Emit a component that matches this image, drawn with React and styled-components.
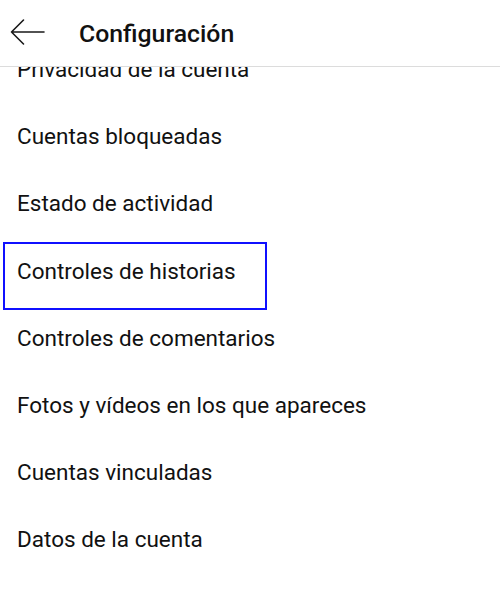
import React, { useLayoutEffect, useRef } from "react";
import styled, { createGlobalStyle } from "styled-components";

const Global = createGlobalStyle`
  html, body { margin: 0; padding: 0; background: #fff; }
  body { font-family: Roboto, "Noto Sans", sans-serif; color: #000; }
`;

const Screen = styled.div`
  width: 500px;
  height: 592px;
  display: flex;
  flex-direction: column;
  background: #fff;
  overflow: hidden;
`;

const Header = styled.header`
  flex: 0 0 66px;
  display: flex;
  align-items: center;
  border-bottom: 1px solid #dcdcdc;
  padding-left: 10px;
  gap: 33px;
`;

const BackButton = styled.button`
  width: 36px;
  height: 28px;
  padding: 0;
  border: 0;
  background: none;
  display: flex;
  align-items: center;
  justify-content: center;
  margin-top: -2px;
`;

const Title = styled.h1`
  margin: 0;
  font-family: Roboto, sans-serif;
  font-weight: 500;
  font-size: 24.8px;
  color: #111;
`;

const Viewport = styled.div`
  flex: 1;
  overflow-y: auto;
  scrollbar-width: none;
  &::-webkit-scrollbar { display: none; }
`;

const List = styled.ul`
  list-style: none;
  margin: 0;
  padding: 0 0 120px 0;
`;

const Row = styled.li`
  position: relative;
  height: 67.2px;
  box-sizing: border-box;
  padding: 17px 0 0 17px;
  font-size: 22.5px;
  line-height: 24px;
  color: #111;
  &::after {
    content: "";
    display: ${(p) => (p.$highlighted ? "block" : "none")};
    position: absolute;
    left: 3px;
    top: 0;
    width: 264px;
    height: 68px;
    box-sizing: border-box;
    border: 2px solid #1010ff;
  }
`;

const items = [
  "Privacidad de la cuenta",
  "Cuentas bloqueadas",
  "Estado de actividad",
  "Controles de historias",
  "Controles de comentarios",
  "Fotos y vídeos en los que apareces",
  "Cuentas vinculadas",
  "Datos de la cuenta",
];

export default function App() {
  const ref = useRef(null);
  useLayoutEffect(() => {
    if (ref.current) ref.current.scrollTop = 27;
  }, []);
  return (
    <Screen>
      <Global />
      <Header>
        <BackButton aria-label="Atrás">
          <svg width="36" height="28" viewBox="0 0 36 28" fill="none">
            <path d="M1.5 14 H34 M13.5 2 L1.5 14 L13.5 26" stroke="#1a1a1a" strokeWidth="1.6" strokeLinecap="round" strokeLinejoin="round" />
          </svg>
        </BackButton>
        <Title>Configuración</Title>
      </Header>
      <Viewport ref={ref}>
        <List>
          {items.map((t, i) => (
            <Row key={t} $highlighted={i === 3}>{t}</Row>
          ))}
        </List>
      </Viewport>
    </Screen>
  );
}
